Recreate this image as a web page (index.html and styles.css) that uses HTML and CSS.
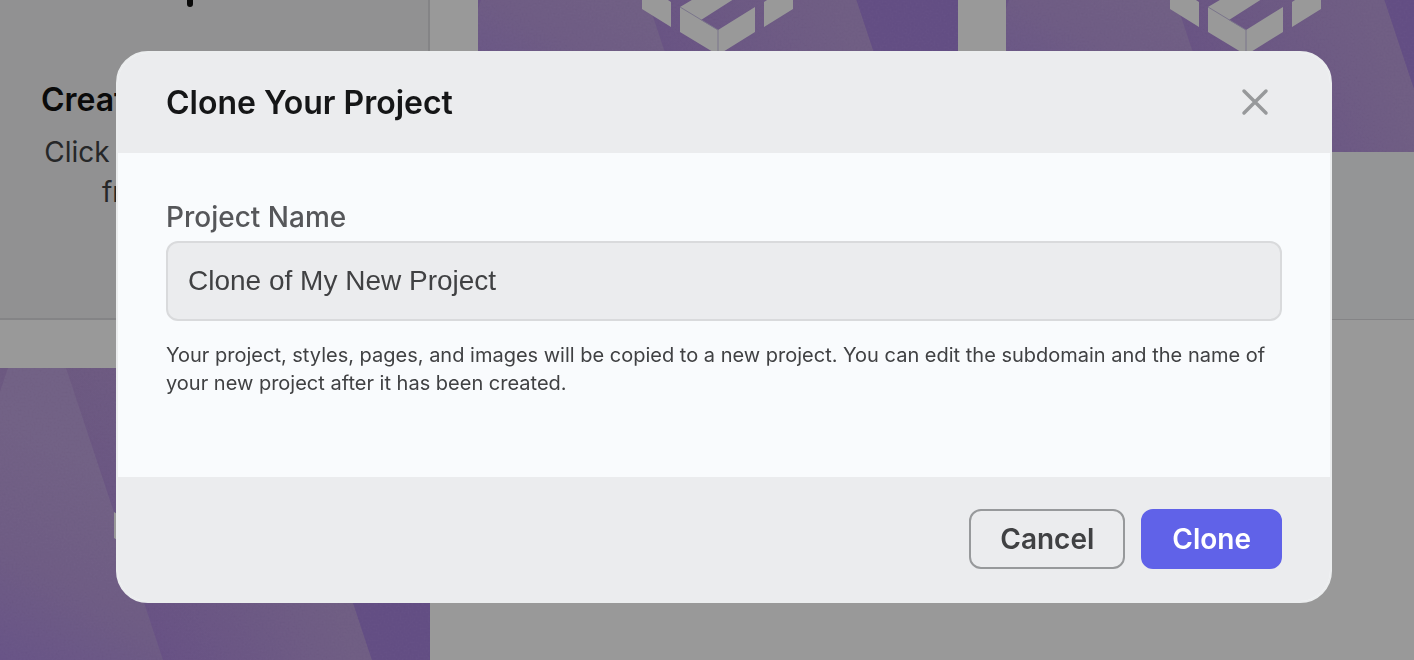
FILE: index.html
```html
<!DOCTYPE html>
<html lang="en">
<head>
<meta charset="utf-8">
<title>Clone Your Project</title>
<link rel="stylesheet" href="styles.css">
</head>
<body>
<svg class="defs" aria-hidden="true">
  <defs>
    <linearGradient id="base" x1="0" y1="0" x2="0" y2="1">
      <stop offset="0" stop-color="#b592da"/>
      <stop offset="1" stop-color="#ab82e2"/>
    </linearGradient>
    <linearGradient id="band-left" gradientUnits="userSpaceOnUse" x1="130" y1="90" x2="20" y2="290">
      <stop offset="0" stop-color="#bfa1e2"/>
      <stop offset="0.5" stop-color="#b998e0"/>
      <stop offset="1" stop-color="#ac87e6"/>
    </linearGradient>
    <linearGradient id="band-middle" gradientUnits="userSpaceOnUse" x1="180" y1="220" x2="360" y2="160">
      <stop offset="0" stop-color="#bb9bdf" stop-opacity="0"/>
      <stop offset="1" stop-color="#bb9bdf"/>
    </linearGradient>
    <filter id="grain" x="0" y="0" width="100%" height="100%">
      <feTurbulence type="fractalNoise" baseFrequency="0.5" numOctaves="2" seed="4"/>
      <feColorMatrix values="0.33 0.33 0.33 0 0  0.33 0.33 0.33 0 0  0.33 0.33 0.33 0 0  0 0 0 0 1"/>
    </filter>
    <symbol id="cover" viewBox="0 0 480 313">
      <rect width="480" height="313" fill="url(#base)"/>
      <path d="M58 0H116L220 313H0V170Z" fill="url(#band-left)"/>
      <path d="M220 0H325L429 313H220L116 0Z" fill="url(#band-middle)"/>
      <path d="M325 0H480V313H429Z" fill="#a57fe0"/>
      <rect class="grain" width="480" height="313" filter="url(#grain)"/>
      <path d="M164 144L193 163V188L164 170ZM315 144L286 163V188L315 170Z" fill="#fff"/>
      <path d="M202 168L246 142L270 151L223 181L240 191L277 168V193L240 216L202 193Z" fill="#fff"/>
      <path d="M202 168L240 191V216" fill="none" stroke="#ccc4e8" stroke-width="1"/>
    </symbol>
  </defs>
</svg>

<main class="projects">
  <section class="card card-new">
    <svg class="plus" viewBox="0 0 60 60" aria-hidden="true"><path d="M30 3V57M3 30H57"/></svg>
    <h2 class="new-title">Create New Project</h2>
    <p class="new-text">Click here to start one<br>from scratch.</p>
  </section>
  <article class="card"><svg class="cover"><use href="#cover"/></svg></article>
  <article class="card"><svg class="cover"><use href="#cover"/></svg></article>
  <article class="card"><svg class="cover"><use href="#cover"/></svg></article>
</main>

<div class="overlay">
  <form class="modal" role="dialog" aria-labelledby="modal-title">
    <header class="modal-header">
      <h1 class="modal-title" id="modal-title">Clone Your Project</h1>
      <button class="close" type="button" aria-label="Close">
        <svg class="close-icon" viewBox="0 0 30 30" aria-hidden="true"><path d="M4 3L26 25M26 3L4 25" stroke-width="3.5"/></svg>
      </button>
    </header>
    <div class="modal-body">
      <label class="label" for="project-name">Project Name</label>
      <input class="input" id="project-name" type="text" value="Clone of My New Project">
      <p class="hint">Your project, styles, pages, and images will be copied to a new project. You can edit the subdomain and the name of your new project after it has been created.</p>
    </div>
    <footer class="modal-footer">
      <button class="button button-outline" type="button">Cancel</button>
      <button class="button button-primary" type="submit">Clone</button>
    </footer>
  </form>
</div>
</body>
</html>
```
FILE: styles.css
```css
* { box-sizing: border-box; }

body {
  margin: 0;
  height: 100vh;
  overflow: hidden;
  background: #fff;
  font-family: Inter, "Liberation Sans", sans-serif;
}

.defs { position: absolute; width: 0; height: 0; }

.projects {
  display: grid;
  grid-template-columns: repeat(3, 480px);
  grid-auto-rows: 481px;
  gap: 48px;
  margin: -161px 0 0 -50px;
}

.card {
  display: flex;
  flex-direction: column;
  background: #f7f9fa;
  border-bottom: 1px solid #dcdddf;
}

.card-new {
  align-items: center;
  background: #f2f2f4;
  border: 2px solid #dcdce0;
  padding-top: 106px;
  text-align: center;
}

.plus {
  width: 60px;
  height: 60px;
  fill: none;
  stroke: #121212;
  stroke-width: 6;
  stroke-linecap: round;
}

.new-title {
  margin: 71px 0 10px;
  font-size: 32px;
  line-height: 44px;
  font-weight: 600;
  color: #121212;
}

.new-text {
  margin: 0;
  font-size: 28px;
  line-height: 40px;
  color: #404143;
}

.cover { display: block; width: 100%; height: 313px; }
.grain { opacity: 0.08; }

.overlay {
  position: fixed;
  inset: 0;
  display: flex;
  align-items: flex-start;
  padding: 51px 82px 57px 116px;
  background: rgba(0, 0, 0, 0.4);
}

.modal {
  flex: 1;
  overflow: hidden;
  border: 2px solid #ebedee;
  border-radius: 32px;
  background: #f9fbfd;
}

.modal-header {
  display: flex;
  align-items: center;
  justify-content: space-between;
  height: 100px;
  padding: 0 60px 0 48px;
  background: #ebecee;
}

.modal-title {
  margin: 0;
  font-size: 32px;
  line-height: 40px;
  font-weight: 600;
  color: #151617;
}

.close {
  display: flex;
  padding: 0;
  border: 0;
  background: none;
}

.close-icon {
  width: 30px;
  height: 30px;
  fill: none;
  stroke: #97999b;
  stroke-linecap: round;
}

.modal-body {
  display: flex;
  flex-direction: column;
  padding: 44px 48px 80px;
}

.label {
  font-size: 28px;
  line-height: 40px;
  font-weight: 500;
  color: #56575a;
}

.input {
  width: 100%;
  height: 80px;
  margin-top: 4px;
  padding: 0 20px;
  border: 2px solid #d9dadc;
  border-radius: 12px;
  background: #ebecee;
  font-family: "Liberation Sans", Arial, sans-serif;
  font-size: 28px;
  color: #404143;
}

.hint {
  margin: 20px 0 0;
  font-size: 20px;
  line-height: 28px;
  color: #404143;
}

.modal-footer {
  display: flex;
  justify-content: flex-end;
  gap: 16px;
  padding: 32px 48px;
  background: #ebecee;
}

.button {
  height: 60px;
  padding: 0 29px;
  border: 2px solid transparent;
  border-radius: 12px;
  font-family: inherit;
  font-size: 28px;
  font-weight: 600;
}

.button-outline { border-color: #97999b; background: none; color: #404143; }
.button-primary { border-color: #6062e8; background: #6062e8; color: #fff; }
```
